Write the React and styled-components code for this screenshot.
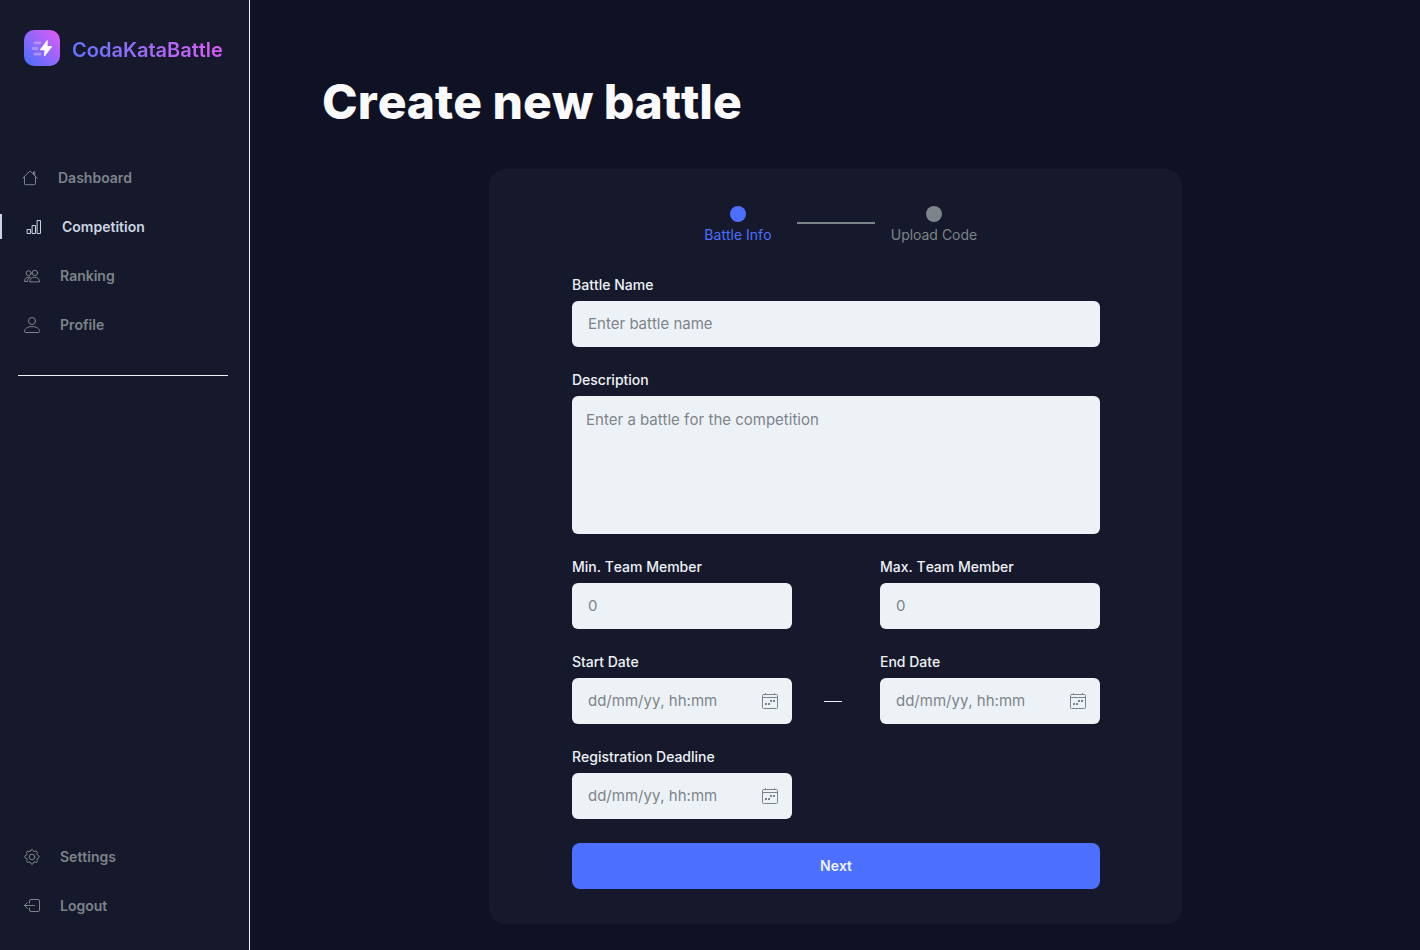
import React from "react";
import styled, { createGlobalStyle } from "styled-components";

const color = {
  page: "#0f1224",
  panel: "#16192b",
  light: "#edf2f7",
  muted: "#7d8489",
  active: "#cbd5e0",
  primary: "#4c6fff",
};

const GlobalStyle = createGlobalStyle`
  * { box-sizing: border-box; }
  body {
    margin: 0;
    background: ${color.page};
    color: ${color.light};
    font-family: Inter, "Liberation Sans", sans-serif;
    font-kerning: none;
    font-feature-settings: "calt" 0, "liga" 0;
  }
  input, textarea, button {
    font-kerning: inherit;
    font-feature-settings: inherit;
  }
`;

const Page = styled.div`
  display: flex;
  min-height: 100vh;
`;

const Sidebar = styled.aside`
  display: flex;
  flex-direction: column;
  flex: 0 0 250px;
  padding: 30px 0 32px;
  background: ${color.panel};
  border-right: 1px solid ${color.light};
`;

const Brand = styled.a`
  display: flex;
  align-items: center;
  gap: 12px;
  margin: 0 0 99px 24px;
  text-decoration: none;
`;

const BrandName = styled.span`
  padding-top: 4px;
  font-size: 20px;
  line-height: 24px;
  font-weight: 600;
  color: transparent;
  background: linear-gradient(75deg, #5f74ff 0%, #a06bf5 50%, #dc5cf5 100%);
  background-clip: text;
  -webkit-background-clip: text;
`;

const Nav = styled.nav`
  display: flex;
  flex-direction: column;
  gap: 24px;
`;

const NavLink = styled.a`
  display: flex;
  align-items: center;
  gap: 20px;
  height: 25px;
  padding-left: 22px;
  border-left: ${(p) => (p.$active ? `2px solid ${color.active}` : "none")};
  color: ${(p) => (p.$active ? color.active : color.muted)};
  font-size: 14px;
  font-weight: 600;
  text-decoration: none;
`;

const Divider = styled.hr`
  width: auto;
  margin: 38px 21px auto 18px;
  border: 0;
  border-top: 1px solid ${color.light};
`;

const Main = styled.main`
  flex: 1;
  min-width: 0;
  padding: 73px 71px 26px 72px;
`;

const Title = styled.h1`
  margin: 0 0 38px;
  font-size: 48px;
  line-height: 58px;
  font-weight: 800;
  color: #fafafa;
`;

const Card = styled.form`
  max-width: 693px;
  margin: 0 auto;
  padding: 37px 82px 35px 83px;
  background: ${color.panel};
  border-radius: 16px;
`;

const Stepper = styled.ol`
  display: flex;
  justify-content: center;
  gap: 15px;
  margin: 0 0 31px;
  padding: 0;
  list-style: none;
`;

const Step = styled.li`
  display: flex;
  flex-direction: column;
  align-items: center;
  gap: 3px;
  width: 88px;
  font-size: 14px;
  line-height: 20px;
  white-space: nowrap;
  color: ${(p) => (p.$active ? color.primary : color.muted)};

  &::before {
    content: "";
    width: 16px;
    height: 16px;
    border-radius: 50%;
    background: currentColor;
  }
`;

const StepLine = styled.li`
  width: 78px;
  height: 2px;
  margin-top: 16px;
  background: ${color.muted};
`;

const Fields = styled.div`
  display: flex;
  flex-direction: column;
  gap: 24px;
`;

const Row = styled.div`
  display: grid;
  grid-template-columns: 5fr 2fr 5fr;
`;

const FieldBox = styled.div`
  display: flex;
  flex-direction: column;
  gap: 7px;
  min-width: 0;
  grid-column: ${(p) => (p.$end ? 3 : "auto")};
`;

const Label = styled.label`
  font-size: 14px;
  line-height: 18px;
  font-weight: 500;
`;

const Control = styled.div`
  display: flex;
  align-items: center;
  height: 46px;
  background: ${color.light};
  border-radius: 6px;
`;

const Input = styled.input`
  flex: 1;
  min-width: 0;
  height: 46px;
  padding: 0 16px 2px;
  border: 0;
  background: transparent;
  color: ${color.panel};
  font-family: inherit;
  font-size: 15px;

  &::placeholder { color: ${color.muted}; opacity: 1; }
`;

const TextArea = styled.textarea`
  display: block;
  height: 138px;
  padding: 14px;
  border: 0;
  border-radius: 6px;
  resize: none;
  background: ${color.light};
  color: ${color.panel};
  font-family: inherit;
  font-size: 15px;
  line-height: 20px;

  &::placeholder { color: ${color.muted}; opacity: 1; }
`;

const CalendarButton = styled.button`
  display: flex;
  padding: 0;
  margin-right: 14px;
  border: 0;
  background: none;
  color: ${color.muted};
  cursor: pointer;
`;

const RangeDash = styled.span`
  align-self: end;
  width: 18px;
  height: 1px;
  margin: 0 0 22px 32px;
  background: ${color.light};
`;

const NextButton = styled.button`
  height: 46px;
  padding: 0 0 2px;
  border: 0;
  border-radius: 8px;
  background: ${color.primary};
  color: ${color.light};
  font-family: inherit;
  font-size: 14px;
  font-weight: 600;
  cursor: pointer;
`;

const Stroke = styled.svg`
  display: block;
  flex: none;
  fill: none;
  stroke: currentColor;
  stroke-width: 1;
  stroke-linecap: round;
  stroke-linejoin: round;
`;

const HomeIcon = () => (
  <Stroke width="16" height="16" viewBox="0 0 16 16" aria-hidden="true">
    <path d="M.8 8.2 7.3 1.5a1 1 0 0 1 1.4 0l6.5 6.7M2.5 6.6v7.2a.9.9 0 0 0 .9.9h9.2a.9.9 0 0 0 .9-.9V6.6M11.5 4V1.8h1.3v3.6" />
  </Stroke>
);

const NavIcon = ({ children }) => (
  <Stroke width="18" height="18" viewBox="-2 -1 18 18" aria-hidden="true">{children}</Stroke>
);

const BarsIcon = () => (
  <NavIcon>
    <path d="M1.5 10.5h3v4h-3zM6.5 6.5h3v8h-3zM11.5 1.5h3v13h-3z" />
  </NavIcon>
);

const PeopleIcon = () => (
  <NavIcon>
    <circle cx="4.7" cy="5.2" r="2.5" />
    <circle cx="10.9" cy="4.9" r="2.7" />
    <path d="M5.7 13.5c0-2.7 2-4.3 4.9-4.3s4.9 1.6 4.9 4.3zM3.4 13.5H.5c0-2.6 1.400-4.300 4.200-4.300.8 0 1.300.1 1.800.4M3.400 13.500c0-1.700.7-3 2.100-3.900" />
  </NavIcon>
);

const PersonIcon = () => (
  <NavIcon>
    <circle cx="8" cy="4" r="3.5" />
    <path d="M.5 14.5c0-3 2.900-4.900 7.500-4.900s7.500 1.900 7.500 4.900c0 .6-.3 1-.9 1H1.400c-.6 0-.9-.4-.9-1Z" />
  </NavIcon>
);

const GearIcon = () => (
  <NavIcon>
    <circle cx="8" cy="8" r="2.8" />
    <path d="M6.700 1.600c.4-1.500 2.200-1.500 2.600 0a1.300 1.300 0 0 0 2 .8c1.300-.8 2.600.5 1.800 1.800a1.300 1.300 0 0 0 .8 2c1.600.4 1.600 2.800 0 3.200a1.300 1.300 0 0 0-.8 2c.8 1.300-.5 2.600-1.800 1.800a1.300 1.300 0 0 0-2 .8c-.4 1.900-2.200 1.900-2.600 0a1.300 1.300 0 0 0-2-.8c-1.300.8-2.600-.5-1.800-1.800a1.300 1.300 0 0 0-.8-2c-1.900-.4-1.900-2.800 0-3.200a1.300 1.300 0 0 0 .8-2c-.8-1.300.5-2.600 1.800-1.800a1.300 1.300 0 0 0 2-.8Z" />
  </NavIcon>
);

const LogoutIcon = () => (
  <NavIcon>
    <path d="M5.500 5V3a1.500 1.500 0 0 1 1.500-1.500h7A1.500 1.500 0 0 1 15.500 3v9a1.500 1.500 0 0 1-1.500 1.500H7A1.500 1.500 0 0 1 5.500 12v-2M10.500 7.500H.5M3.500 4.500l-3 3 3 3" />
  </NavIcon>
);

const CalendarIcon = () => (
  <Stroke width="16" height="16" viewBox="0 0 16 16" aria-hidden="true">
    <path d="M1.500 1.500h13a1 1 0 0 1 1 1v12a1 1 0 0 1-1 1h-13a1 1 0 0 1-1-1v-12a1 1 0 0 1 1-1ZM.5 4.500h15M3.500.500v1M12.500.500v1" />
    <path d="M3 11h2M6 11h2M8 8h2M11 8h2" strokeWidth="2" strokeLinecap="butt" />
  </Stroke>
);

const Logo = () => (
  <svg width="36" height="36" viewBox="0 0 36 36" aria-hidden="true">
    <defs>
      <linearGradient id="brand" x1="2" y1="34" x2="34" y2="2" gradientUnits="userSpaceOnUse">
        <stop stopColor="#4c6fff" />
        <stop offset="1" stopColor="#dc5cf5" />
      </linearGradient>
    </defs>
    <rect width="36" height="36" rx="10" fill="url(#brand)" />
    <path d="M11 12.800h5M9 18.500h4M11 24.200h5" stroke="#fff" strokeOpacity=".3" strokeWidth="2.8" strokeLinecap="round" />
    <path d="M22.600 10.700 16.200 19.200c-.4.6-.1 1.100.5 1.100h3.800l-.6 5.100c0 .8.7 1 1.200.4l6.600-8.600c.4-.6.1-1.100-.5-1.100h-3.600l.2-5c0-.8-.8-1-1.200-.4Z" fill="#fff" />
  </svg>
);

function TextField({ id, label, placeholder, date, end }) {
  return (
    <FieldBox $end={end}>
      <Label htmlFor={id}>{label}</Label>
      <Control>
        <Input id={id} name={id} placeholder={placeholder} />
        {date && (
          <CalendarButton type="button" aria-label={`Pick ${label}`}>
            <CalendarIcon />
          </CalendarButton>
        )}
      </Control>
    </FieldBox>
  );
}

const mainLinks = [
  { name: "Dashboard", icon: HomeIcon },
  { name: "Competition", icon: BarsIcon, active: true },
  { name: "Ranking", icon: PeopleIcon },
  { name: "Profile", icon: PersonIcon },
];

const accountLinks = [
  { name: "Settings", icon: GearIcon },
  { name: "Logout", icon: LogoutIcon },
];

const Links = ({ items, label }) => (
  <Nav aria-label={label}>
    {items.map(({ name, icon: Icon, active }) => (
      <NavLink key={name} href={`#${name.toLowerCase()}`} $active={active} aria-current={active ? "page" : undefined}>
        <Icon />
        {name}
      </NavLink>
    ))}
  </Nav>
);

export default function App() {
  return (
    <>
      <GlobalStyle />
      <Page>
        <Sidebar>
          <Brand href="#home">
            <Logo />
            <BrandName>CodaKataBattle</BrandName>
          </Brand>
          <Links items={mainLinks} label="Main" />
          <Divider />
          <Links items={accountLinks} label="Account" />
        </Sidebar>
        <Main>
          <Title>Create new battle</Title>
          <Card onSubmit={(e) => e.preventDefault()}>
            <Stepper>
              <Step $active aria-current="step">Battle Info</Step>
              <StepLine aria-hidden="true" />
              <Step>Upload Code</Step>
            </Stepper>
            <Fields>
              <TextField id="name" label="Battle Name" placeholder="Enter battle name" />
              <FieldBox>
                <Label htmlFor="description">Description</Label>
                <TextArea id="description" name="description" placeholder="Enter a battle for the competition" />
              </FieldBox>
              <Row>
                <TextField id="min" label="Min. Team Member" placeholder="0" />
                <TextField id="max" label="Max. Team Member" placeholder="0" end />
              </Row>
              <Row>
                <TextField id="start" label="Start Date" placeholder="dd/mm/yy, hh:mm" date />
                <RangeDash />
                <TextField id="end" label="End Date" placeholder="dd/mm/yy, hh:mm" date end />
              </Row>
              <Row>
                <TextField id="deadline" label="Registration Deadline" placeholder="dd/mm/yy, hh:mm" date />
              </Row>
              <NextButton type="submit">Next</NextButton>
            </Fields>
          </Card>
        </Main>
      </Page>
    </>
  );
}
